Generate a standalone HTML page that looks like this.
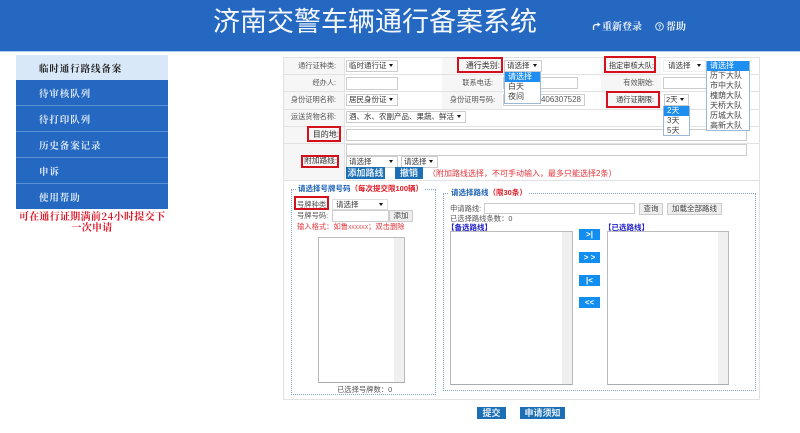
<!DOCTYPE html>
<html><head><meta charset="utf-8">
<style>
html,body{margin:0;padding:0;background:#fff;}
body{width:800px;height:433px;overflow:hidden;position:relative;font-family:"Liberation Sans","Noto Sans CJK SC",sans-serif;font-size:8px;color:#444;}
#w{position:absolute;left:0;top:0;width:800px;height:433px;overflow:hidden;filter:blur(.3px);}
.a{position:absolute;white-space:nowrap;box-sizing:border-box;}
.m{position:absolute;left:16px;width:152px;height:26px;line-height:27px;padding-left:23px;background:#2468c2;color:#dfe9f7;font-size:9.5px;font-weight:bold;font-family:"Noto Serif CJK SC",serif;letter-spacing:.9px;border-bottom:1px solid #5c8fd4;box-sizing:border-box;}
.l{position:absolute;text-align:right;font-size:7.2px;line-height:16px;color:#555;height:16px;white-space:nowrap;}
.h{position:absolute;background:#f6f6f6;}
.hl{position:absolute;left:283px;width:477px;height:1px;background:#e2e2e2;}
.vl{position:absolute;width:1px;background:#e2e2e2;}
.s{position:absolute;box-sizing:border-box;border:1px solid #ccc;background:#fff;height:12px;line-height:10px;padding-left:2px;font-size:7.5px;color:#333;white-space:nowrap;}
.s:after{content:"";position:absolute;right:4px;top:3px;border-left:2.5px solid transparent;border-right:2.5px solid transparent;border-top:3px solid #111;}
.i{position:absolute;box-sizing:border-box;border:1px solid #ccc;background:#fff;}
.r{position:absolute;box-sizing:border-box;border:2px solid #d3101c;}
.dd{position:absolute;box-sizing:border-box;border:1px solid #9bb8d8;border-top:0;background:#fff;font-size:8px;color:#444;}
.dd div{height:10px;line-height:10px;padding-left:3px;}
.dd .on{background:#1e8ff0;color:#fff;}
.bb{position:absolute;background:#1c6fb4;color:#e3eef8;font-weight:bold;text-align:center;font-size:9px;}
.ab{position:absolute;left:579px;width:21px;height:11px;background:#128df0;color:#fff;font-weight:bold;text-align:center;line-height:11px;font-size:8px;}
.g{position:absolute;box-sizing:border-box;border:1px solid #ccc;background:#eee;color:#444;text-align:center;font-size:7.5px;}
.t{position:absolute;box-sizing:border-box;border:1px solid #bbb;border-bottom-color:#aaa;background:#fff;}
.t:after{content:"";position:absolute;right:0;top:0;bottom:0;width:10px;background:#f0f0f0;}
</style></head><body><div id="w">
<div class="a" style="left:0;top:0;width:800px;height:51px;background:#2468c2;"></div>
<div class="a" style="left:0;top:51px;width:800px;height:1px;background:#a9cdf0;"></div>
<div class="a" style="left:213px;top:3px;font-size:27px;line-height:38px;color:#f4f8fd;">济南交警车辆通行备案系统</div>
<svg class="a" style="left:592px;top:21px;" width="9" height="10" viewBox="0 0 9 10"><path d="M1.5 9V6Q1.5 3.5 5 3.5H6" fill="none" stroke="#f1f5fb" stroke-width="1.3"/><path d="M5.5 1.2L8.5 3.5L5.5 5.8Z" fill="#f1f5fb"/></svg>
<div class="a" style="left:602px;top:19px;font-size:10px;line-height:14px;color:#f1f5fb;font-weight:bold;font-family:'Noto Serif CJK SC',serif;">重新登录</div>
<svg class="a" style="left:655px;top:22px;" width="9" height="9" viewBox="0 0 9 9"><circle cx="4.5" cy="4.5" r="3.8" fill="none" stroke="#f1f5fb" stroke-width=".9"/><path d="M3.2 3.5Q4.5 2 5.8 3.5L4.5 5V5.6M4.5 6.3V7" fill="none" stroke="#f1f5fb" stroke-width=".8"/></svg>
<div class="a" style="left:666px;top:19px;font-size:10px;line-height:14px;color:#f1f5fb;font-weight:bold;font-family:'Noto Serif CJK SC',serif;">帮助</div>

<div class="m" style="top:55px;background:#d8e8f8;color:#222;line-height:26px;">临时通行路线备案</div>
<div class="m" style="top:80px;">待审核队列</div>
<div class="m" style="top:106px;">待打印队列</div>
<div class="m" style="top:132px;">历史备案记录</div>
<div class="m" style="top:158px;">申诉</div>
<div class="m" style="top:184px;border-bottom:0;height:25px;">使用帮助</div>
<div class="a" style="left:16px;top:210px;width:152px;text-align:center;white-space:nowrap;font-size:10px;line-height:11px;letter-spacing:.3px;color:#dc1626;font-weight:bold;font-family:'Noto Serif CJK SC',serif;">可在通行证期满前24小时提交下<br>一次申请</div>

<!-- table frame -->
<div class="a" style="left:283px;top:57px;width:477px;height:343px;border:1px solid #e2e2e2;"></div>
<div class="h" style="left:284px;top:58px;width:60px;height:122px;"></div>
<div class="h" style="left:442px;top:58px;width:60px;height:51px;"></div>
<div class="h" style="left:601px;top:58px;width:60px;height:51px;"></div>
<div class="hl" style="top:74px"></div><div class="hl" style="top:91px"></div><div class="hl" style="top:109px"></div><div class="hl" style="top:126px"></div><div class="hl" style="top:143px"></div><div class="hl" style="top:180px"></div>
<div class="vl" style="left:344px;top:57px;height:123px"></div>

<div class="l" style="left:284px;top:58px;width:52px;">通行证种类:</div>
<div class="l" style="left:284px;top:75px;width:52px;">经办人:</div>
<div class="l" style="left:284px;top:92px;width:52px;">身份证明名称:</div>
<div class="l" style="left:284px;top:109px;width:52px;">运送货物名称:</div>
<div class="l" style="left:284px;top:127px;width:55px;color:#333;font-size:8px;">目的地:</div>
<div class="l" style="left:284px;top:153px;width:53px;color:#333;font-size:7.7px;">附加路线:</div>
<div class="l" style="left:442px;top:58px;width:58px;color:#333;font-size:8px;">通行类别:</div>
<div class="l" style="left:442px;top:75px;width:51px;">联系电话:</div>
<div class="l" style="left:442px;top:92px;width:53px;">身份证明号码:</div>
<div class="l" style="left:595px;top:58px;width:59px;color:#333;">指定审核大队:</div>
<div class="l" style="left:595px;top:75px;width:59px;">有效期始:</div>
<div class="l" style="left:595px;top:92px;width:59px;color:#333;">通行证期限:</div>

<div class="s" style="left:346px;top:60px;width:52px;">临时通行证</div>
<div class="i" style="left:346px;top:77px;width:52px;height:13px;"></div>
<div class="s" style="left:346px;top:94px;width:52px;">居民身份证</div>
<div class="s" style="left:346px;top:111px;width:120px;">酒、水、农副产品、果蔬、鲜活</div>
<div class="i" style="left:346px;top:129px;width:401px;height:12px;"></div>
<div class="i" style="left:346px;top:144px;width:401px;height:12px;"></div>
<div class="s" style="left:346px;top:156px;width:52px;">请选择</div>
<div class="s" style="left:401px;top:156px;width:37px;">请选择</div>
<div class="s" style="left:504px;top:60px;width:38px;">请选择</div>
<div class="i" style="left:503px;top:77px;width:75px;height:12px;"></div>
<div class="i" style="left:503px;top:94px;width:82px;height:12px;font-size:8px;line-height:10px;text-align:right;padding-right:3px;color:#555;">406307528</div>
<div class="s" style="left:663px;top:60px;width:43px;border-color:#eee;padding-left:4px;">请选择</div>
<div class="i" style="left:663px;top:77px;width:44px;height:12px;"></div>
<div class="s" style="left:664px;top:94px;width:25px;padding-left:1px;">2天</div>

<div class="dd" style="left:504px;top:72px;width:37px;height:32px;">
<div class="on">请选择</div><div>白天</div><div>夜间</div></div>
<div class="dd" style="left:706px;top:61px;width:44px;height:70px;">
<div class="on">请选择</div><div>历下大队</div><div>市中大队</div><div>槐荫大队</div><div>天桥大队</div><div>历城大队</div><div>高新大队</div></div>
<div class="dd" style="left:663px;top:106px;width:27px;height:30px;">
<div class="on">2天</div><div>3天</div><div>5天</div></div>

<div class="bb" style="left:346px;top:167px;width:39px;height:12px;line-height:12px;">添加路线</div>
<div class="bb" style="left:395px;top:167px;width:28px;height:12px;line-height:12px;">撤销</div>
<div class="a" style="left:428px;top:168px;font-size:8px;line-height:11px;color:#e0343a;">（附加路线选择，不可手动输入，最多只能选择2条）</div>

<!-- red highlight -->
<div class="r" style="left:457px;top:57px;width:46px;height:16px;"></div>
<div class="r" style="left:604px;top:56px;width:52px;height:17px;"></div>
<div class="r" style="left:606px;top:91px;width:54px;height:17px;"></div>
<div class="r" style="left:307px;top:126px;width:34px;height:16px;"></div>
<div class="r" style="left:301px;top:155px;width:38px;height:13px;"></div>
<div class="r" style="left:294px;top:196px;width:35px;height:14px;"></div>

<!-- left fieldset -->
<div class="a" style="left:291px;top:189px;width:145px;height:206px;border:1px dotted #7fa6cf;"></div>
<div class="a" style="left:296px;top:183px;background:#fff;padding:0 2px;font-size:7.5px;line-height:11px;color:#1d62b8;font-weight:bold;">请选择号牌号码<span style="color:#e01a24;">（每次提交限100辆）</span></div>
<div class="a" style="left:297px;top:199px;font-size:7.3px;line-height:11px;color:#555;">号牌种类:</div>
<div class="s" style="left:332px;top:199px;width:56px;border-color:#ddd;height:11px;padding-left:3px;">请选择</div>
<div class="a" style="left:297px;top:210px;font-size:7.3px;line-height:11px;color:#555;">号牌号码:</div>
<div class="i" style="left:332px;top:210px;width:57px;height:12px;"></div>
<div class="g" style="left:389px;top:210px;width:24px;height:12px;line-height:10px;">添加</div>
<div class="a" style="left:297px;top:221px;font-size:7.3px;line-height:11px;color:#e0343a;">输入格式：如鲁<span style="font-size:5px;">XXXXXX</span>；双击删除</div>
<div class="t" style="left:318px;top:237px;width:87px;height:146px;"></div>
<div class="a" style="left:337px;top:384px;font-size:7.3px;line-height:11px;color:#555;">已选择号牌数：0</div>

<!-- right fieldset -->
<div class="a" style="left:443px;top:193px;width:313px;height:198px;border:1px dotted #7fa6cf;"></div>
<div class="a" style="left:449px;top:187px;background:#fff;padding:0 2px;font-size:7.5px;line-height:11px;color:#1d62b8;font-weight:bold;">请选择路线<span style="color:#e01a24;">（限30条）</span></div>
<div class="a" style="left:450px;top:203px;font-size:7.3px;line-height:11px;color:#555;">申请路线:</div>
<div class="i" style="left:484px;top:203px;width:151px;height:11px;"></div>
<div class="g" style="left:639px;top:203px;width:24px;height:12px;line-height:10px;">查询</div>
<div class="g" style="left:667px;top:203px;width:55px;height:12px;line-height:10px;">加载全部路线</div>
<div class="a" style="left:450px;top:214px;font-size:7.3px;line-height:10px;color:#555;">已选择路线条数：0</div>
<div class="a" style="left:447px;top:222px;font-size:7.5px;line-height:11px;color:#1c1cc8;font-weight:bold;">【备选路线】</div>
<div class="a" style="left:604px;top:222px;font-size:7.5px;line-height:11px;color:#1c1cc8;font-weight:bold;">【已选路线】</div>
<div class="t" style="left:450px;top:231px;width:123px;height:154px;"></div>
<div class="t" style="left:607px;top:231px;width:122px;height:154px;"></div>
<div class="ab" style="top:229px;">&gt;|</div>
<div class="ab" style="top:252px;">&gt; &gt;</div>
<div class="ab" style="top:275px;">|&lt;</div>
<div class="ab" style="top:297px;">&lt;&lt;</div>

<div class="bb" style="left:477px;top:407px;width:29px;height:12px;line-height:12px;">提交</div>
<div class="bb" style="left:520px;top:407px;width:45px;height:12px;line-height:12px;">申请须知</div>
</div></body></html>
